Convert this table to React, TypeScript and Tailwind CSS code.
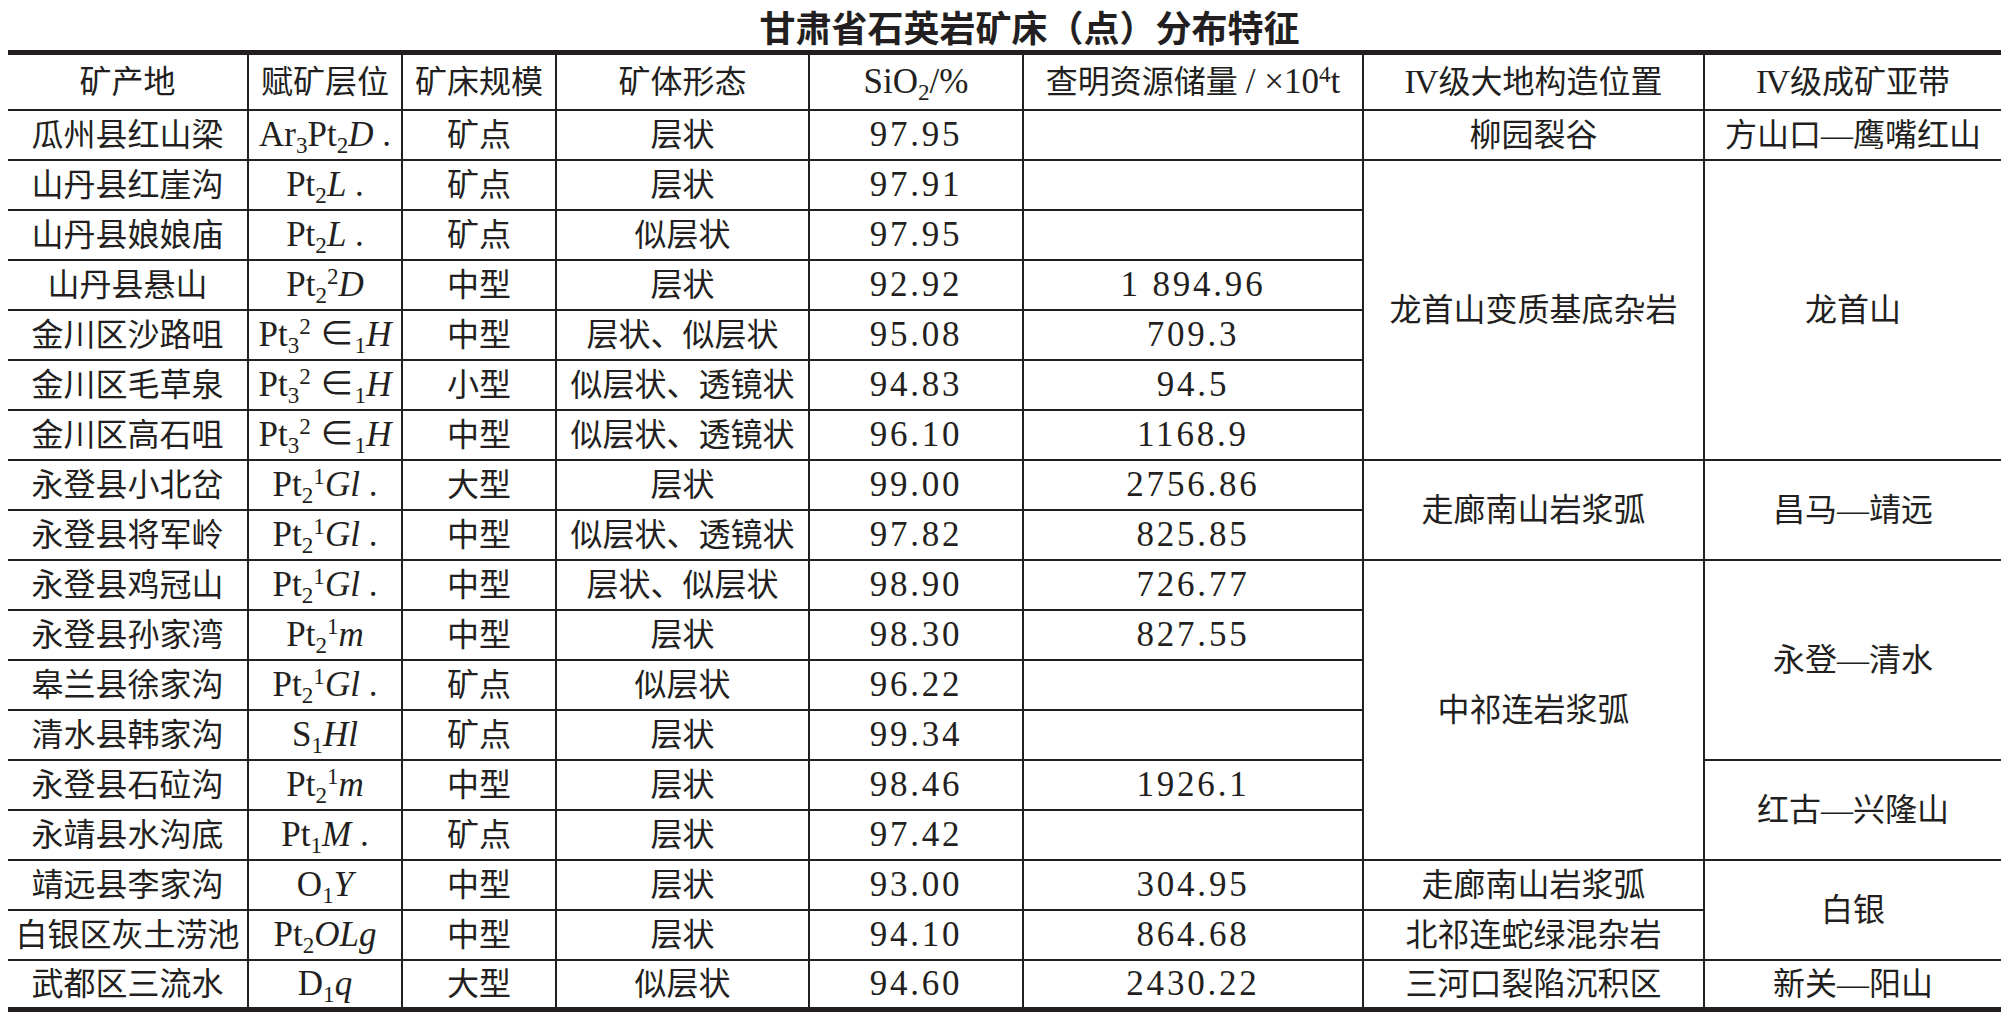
import type { ReactNode } from "react";

type Span = { text: string; span: number };

type Row = {
  place: string;
  layer: ReactNode;
  scale: string;
  shape: string;
  sio2: string;
  reserve: string;
  geo?: Span;
  belt?: Span;
};

const Sub = ({ children }: { children: ReactNode }) => (
  <sub className="text-[0.66em] bottom-[-0.3em]">{children}</sub>
);
const Sup = ({ children }: { children: ReactNode }) => (
  <sup className="text-[0.66em]">{children}</sup>
);

const rows: Row[] = [
  {
    place: "瓜州县红山梁",
    layer: (
      <>
        Ar<Sub>3</Sub>Pt<Sub>2</Sub>
        <i>D</i> .
      </>
    ),
    scale: "矿点",
    shape: "层状",
    sio2: "97.95",
    reserve: "",
    geo: { text: "柳园裂谷", span: 1 },
    belt: { text: "方山口—鹰嘴红山", span: 1 },
  },
  {
    place: "山丹县红崖沟",
    layer: (
      <>
        Pt<Sub>2</Sub>
        <i>L</i> .
      </>
    ),
    scale: "矿点",
    shape: "层状",
    sio2: "97.91",
    reserve: "",
    geo: { text: "龙首山变质基底杂岩", span: 6 },
    belt: { text: "龙首山", span: 6 },
  },
  {
    place: "山丹县娘娘庙",
    layer: (
      <>
        Pt<Sub>2</Sub>
        <i>L</i> .
      </>
    ),
    scale: "矿点",
    shape: "似层状",
    sio2: "97.95",
    reserve: "",
  },
  {
    place: "山丹县悬山",
    layer: (
      <>
        Pt<Sub>2</Sub>
        <Sup>2</Sup>
        <i>D</i>
      </>
    ),
    scale: "中型",
    shape: "层状",
    sio2: "92.92",
    reserve: "1 894.96",
  },
  {
    place: "金川区沙路咀",
    layer: (
      <>
        Pt<Sub>3</Sub>
        <Sup>2</Sup> ∈<Sub>1</Sub>
        <i>H</i>
      </>
    ),
    scale: "中型",
    shape: "层状、似层状",
    sio2: "95.08",
    reserve: "709.3",
  },
  {
    place: "金川区毛草泉",
    layer: (
      <>
        Pt<Sub>3</Sub>
        <Sup>2</Sup> ∈<Sub>1</Sub>
        <i>H</i>
      </>
    ),
    scale: "小型",
    shape: "似层状、透镜状",
    sio2: "94.83",
    reserve: "94.5",
  },
  {
    place: "金川区高石咀",
    layer: (
      <>
        Pt<Sub>3</Sub>
        <Sup>2</Sup> ∈<Sub>1</Sub>
        <i>H</i>
      </>
    ),
    scale: "中型",
    shape: "似层状、透镜状",
    sio2: "96.10",
    reserve: "1168.9",
  },
  {
    place: "永登县小北岔",
    layer: (
      <>
        Pt<Sub>2</Sub>
        <Sup>1</Sup>
        <i>Gl</i> .
      </>
    ),
    scale: "大型",
    shape: "层状",
    sio2: "99.00",
    reserve: "2756.86",
    geo: { text: "走廊南山岩浆弧", span: 2 },
    belt: { text: "昌马—靖远", span: 2 },
  },
  {
    place: "永登县将军岭",
    layer: (
      <>
        Pt<Sub>2</Sub>
        <Sup>1</Sup>
        <i>Gl</i> .
      </>
    ),
    scale: "中型",
    shape: "似层状、透镜状",
    sio2: "97.82",
    reserve: "825.85",
  },
  {
    place: "永登县鸡冠山",
    layer: (
      <>
        Pt<Sub>2</Sub>
        <Sup>1</Sup>
        <i>Gl</i> .
      </>
    ),
    scale: "中型",
    shape: "层状、似层状",
    sio2: "98.90",
    reserve: "726.77",
    geo: { text: "中祁连岩浆弧", span: 6 },
    belt: { text: "永登—清水", span: 4 },
  },
  {
    place: "永登县孙家湾",
    layer: (
      <>
        Pt<Sub>2</Sub>
        <Sup>1</Sup>
        <i>m</i>
      </>
    ),
    scale: "中型",
    shape: "层状",
    sio2: "98.30",
    reserve: "827.55",
  },
  {
    place: "皋兰县徐家沟",
    layer: (
      <>
        Pt<Sub>2</Sub>
        <Sup>1</Sup>
        <i>Gl</i> .
      </>
    ),
    scale: "矿点",
    shape: "似层状",
    sio2: "96.22",
    reserve: "",
  },
  {
    place: "清水县韩家沟",
    layer: (
      <>
        S<Sub>1</Sub>
        <i>Hl</i>
      </>
    ),
    scale: "矿点",
    shape: "层状",
    sio2: "99.34",
    reserve: "",
  },
  {
    place: "永登县石砬沟",
    layer: (
      <>
        Pt<Sub>2</Sub>
        <Sup>1</Sup>
        <i>m</i>
      </>
    ),
    scale: "中型",
    shape: "层状",
    sio2: "98.46",
    reserve: "1926.1",
    belt: { text: "红古—兴隆山", span: 2 },
  },
  {
    place: "永靖县水沟底",
    layer: (
      <>
        Pt<Sub>1</Sub>
        <i>M</i> .
      </>
    ),
    scale: "矿点",
    shape: "层状",
    sio2: "97.42",
    reserve: "",
  },
  {
    place: "靖远县李家沟",
    layer: (
      <>
        O<Sub>1</Sub>
        <i>Y</i>
      </>
    ),
    scale: "中型",
    shape: "层状",
    sio2: "93.00",
    reserve: "304.95",
    geo: { text: "走廊南山岩浆弧", span: 1 },
    belt: { text: "白银", span: 2 },
  },
  {
    place: "白银区灰土涝池",
    layer: (
      <>
        Pt<Sub>2</Sub>
        <i>OLg</i>
      </>
    ),
    scale: "中型",
    shape: "层状",
    sio2: "94.10",
    reserve: "864.68",
    geo: { text: "北祁连蛇绿混杂岩", span: 1 },
  },
  {
    place: "武都区三流水",
    layer: (
      <>
        D<Sub>1</Sub>
        <i>q</i>
      </>
    ),
    scale: "大型",
    shape: "似层状",
    sio2: "94.60",
    reserve: "2430.22",
    geo: { text: "三河口裂陷沉积区", span: 1 },
    belt: { text: "新关—阳山", span: 1 },
  },
];

const cell = "border-[#231f20] border-b-2 text-center align-middle p-0 whitespace-nowrap";
const line = "border-l-2";
const latin = "text-[35px]";
const num = "text-[35px] tracking-[0.08em]";

const Four = () => <span className="text-[34px] tracking-[-0.06em] mr-[2px]">IV</span>;

export default function App() {
  return (
    <div className="w-[2001px] h-[1023px] bg-white text-[#231f20] font-['Liberation_Serif','Noto_Sans_CJK_SC',serif] overflow-hidden">
      {/* 标题 */}
      <div className="h-[50px] pt-[2px] flex items-center justify-center pl-[58px] font-['Noto_Sans_CJK_SC',sans-serif] font-bold text-[36px] leading-[44px]">
        <span>甘肃省石英岩矿床（点）分布特征</span>
      </div>

      <table className="ml-[8px] w-[1993px] table-fixed border-collapse text-[32px] leading-none">
        <colgroup>
          <col className="w-[240px]" />
          <col className="w-[154px]" />
          <col className="w-[154px]" />
          <col className="w-[253px]" />
          <col className="w-[214px]" />
          <col className="w-[340px]" />
          <col className="w-[341px]" />
          <col className="w-[297px]" />
        </colgroup>
        <thead>
          <tr className="h-[57px]">
            <th className={`${cell} font-normal border-t-[5px]`}>矿产地</th>
            <th className={`${cell} ${line} font-normal border-t-[5px]`}>赋矿层位</th>
            <th className={`${cell} ${line} font-normal border-t-[5px]`}>矿床规模</th>
            <th className={`${cell} ${line} font-normal border-t-[5px]`}>矿体形态</th>
            <th className={`${cell} ${line} ${latin} font-normal border-t-[5px]`}>
              SiO<Sub>2</Sub>/%
            </th>
            <th className={`${cell} ${line} font-normal border-t-[5px]`}>
              查明资源储量 <span className={latin}>/ ×10<Sup>4</Sup>t</span>
            </th>
            <th className={`${cell} ${line} font-normal border-t-[5px]`}>
              <Four />级大地构造位置
            </th>
            <th className={`${cell} ${line} font-normal border-t-[5px]`}>
              <Four />级成矿亚带
            </th>
          </tr>
        </thead>
        <tbody>
          {rows.map((r, i) => {
            const last = i === rows.length - 1;
            const b = last ? "border-b-[5px]" : "";
            return (
              <tr key={r.place} className="h-[50px]">
                <td className={`${cell} ${b}`}>{r.place}</td>
                <td className={`${cell} ${line} ${b} ${latin}`}>{r.layer}</td>
                <td className={`${cell} ${line} ${b}`}>{r.scale}</td>
                <td className={`${cell} ${line} ${b}`}>{r.shape}</td>
                <td className={`${cell} ${line} ${b} ${num}`}>{r.sio2}</td>
                <td className={`${cell} ${line} ${b} ${num}`}>{r.reserve}</td>
                {r.geo && (
                  <td
                    rowSpan={r.geo.span}
                    className={`${cell} ${line} ${i + r.geo.span === rows.length ? "border-b-[5px]" : ""}`}
                  >
                    {r.geo.text}
                  </td>
                )}
                {r.belt && (
                  <td
                    rowSpan={r.belt.span}
                    className={`${cell} ${line} ${i + r.belt.span === rows.length ? "border-b-[5px]" : ""}`}
                  >
                    {r.belt.text}
                  </td>
                )}
              </tr>
            );
          })}
        </tbody>
      </table>
    </div>
  );
}
